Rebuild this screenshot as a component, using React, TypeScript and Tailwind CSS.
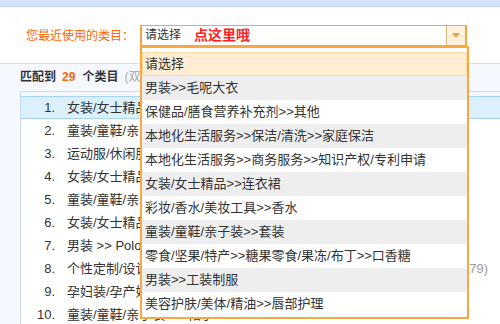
import React from "react";

const dropItems = [
  "男装>>毛呢大衣",
  "保健品/膳食营养补充剂>>其他",
  "本地化生活服务>>保洁/清洗>>家庭保洁",
  "本地化生活服务>>商务服务>>知识产权/专利申请",
  "女装/女士精品>>连衣裙",
  "彩妆/香水/美妆工具>>香水",
  "童装/童鞋/亲子装>>套装",
  "零食/坚果/特产>>糖果零食/果冻/布丁>>口香糖",
  "男装>>工装制服",
  "美容护肤/美体/精油>>唇部护理",
];

const rows = [
  "女装/女士精品 >> 连衣裙",
  "童装/童鞋/亲子装 >> 套装",
  "运动服/休闲服装 >> 运动套装",
  "女装/女士精品 >> 毛呢外套",
  "童装/童鞋/亲子装 >> 亲子装/亲子时装",
  "女装/女士精品 >> 套装/学生校服/工作制服",
  "男装 >> Polo衫",
  "个性定制/设计服务/DIY >> 服装定制",
  "孕妇装/孕产妇用品/营养 >> 孕妇装",
  "童装/童鞋/亲子装 >> 裙子",
];

export default function App() {
  return (
    <div className="relative w-[500px] h-[324px] overflow-hidden bg-[#f5f8fe] font-['Liberation_Sans','Noto_Sans_CJK_SC',sans-serif] text-[#333]">
      <div className="h-[7px] bg-[#d5e3f9] border-b border-[#c3d5f1]" />
      <div className="h-[57px] bg-white border-b border-[#d0ddf4] flex items-start pt-[18px] pl-[26px]">
        <div className="w-[114px] text-[12px] leading-[22px] text-[#ff6600]">您最近使用的类目：</div>
        <div className="w-[327px] h-[22px] border-t border-l-2 border-r-2 border-b-2 border-[#f6a63c] bg-white flex items-stretch">
          <div className="flex-1 flex items-center pl-[3px] whitespace-nowrap">
            <span className="text-[12px] leading-[19px] text-[#333]">请选择</span>
            <span className="ml-[13px] text-[14px] leading-[19px] font-bold text-[#ff2020]">点这里哦</span>
          </div>
          <div className="w-[19px] border-l border-[#dcb47a] bg-[#fff2dc] flex items-center justify-center">
            <svg width="8" height="5" viewBox="0 0 8 5">
              <path d="M0 0H8L4 5Z" fill="#eea23a" />
            </svg>
          </div>
        </div>
      </div>

      <div className="h-[27px] pl-[20px] text-[12px] leading-[26px] font-bold whitespace-nowrap flex">
        <span>匹配到</span>
        <span className="ml-[6px] text-[#ff6600]">29</span>
        <span className="ml-[7px]">个类目</span>
        <span className="ml-[6px] font-normal text-[#aaa]">(双击选择类目)</span>
      </div>

      <div className="ml-[20px] border-t border-l border-[#c9daf3] pt-[4px]">
        {rows.map((r, i) => (
          <div
            key={i}
            className={
              i === 0
                ? "h-[23px] bg-[#dcf0fb] border-t border-b border-[#a6d5f1] flex items-center text-[13px] whitespace-nowrap"
                : "h-[23px] bg-white flex items-center text-[13px] whitespace-nowrap"
            }
          >
            <span className="w-[34px] text-right">{i + 1}.</span>
            <span className="ml-[12px] w-[398px] overflow-hidden">{r}</span>
            {i === 7 && <span className="text-[#999]">(79)</span>}
          </div>
        ))}
      </div>

      <div className="absolute left-[140px] top-[46px] w-[329px] border-2 border-[#f8a83c] bg-white pt-[4px] pb-[1px] text-[13px] text-[#333]">
        <div className="h-[24px] leading-[22px] bg-[#ffeed4] border border-[#fdd8a1] pl-[2px] whitespace-nowrap">请选择</div>
        {dropItems.map((t, i) => (
          <div
            key={i}
            className={
              i % 2 === 0
                ? "h-[24px] leading-[24px] bg-[#eeeeee] pl-[3px] whitespace-nowrap"
                : "h-[24px] leading-[24px] bg-white pl-[3px] whitespace-nowrap"
            }
          >
            {t}
          </div>
        ))}
      </div>
    </div>
  );
}
